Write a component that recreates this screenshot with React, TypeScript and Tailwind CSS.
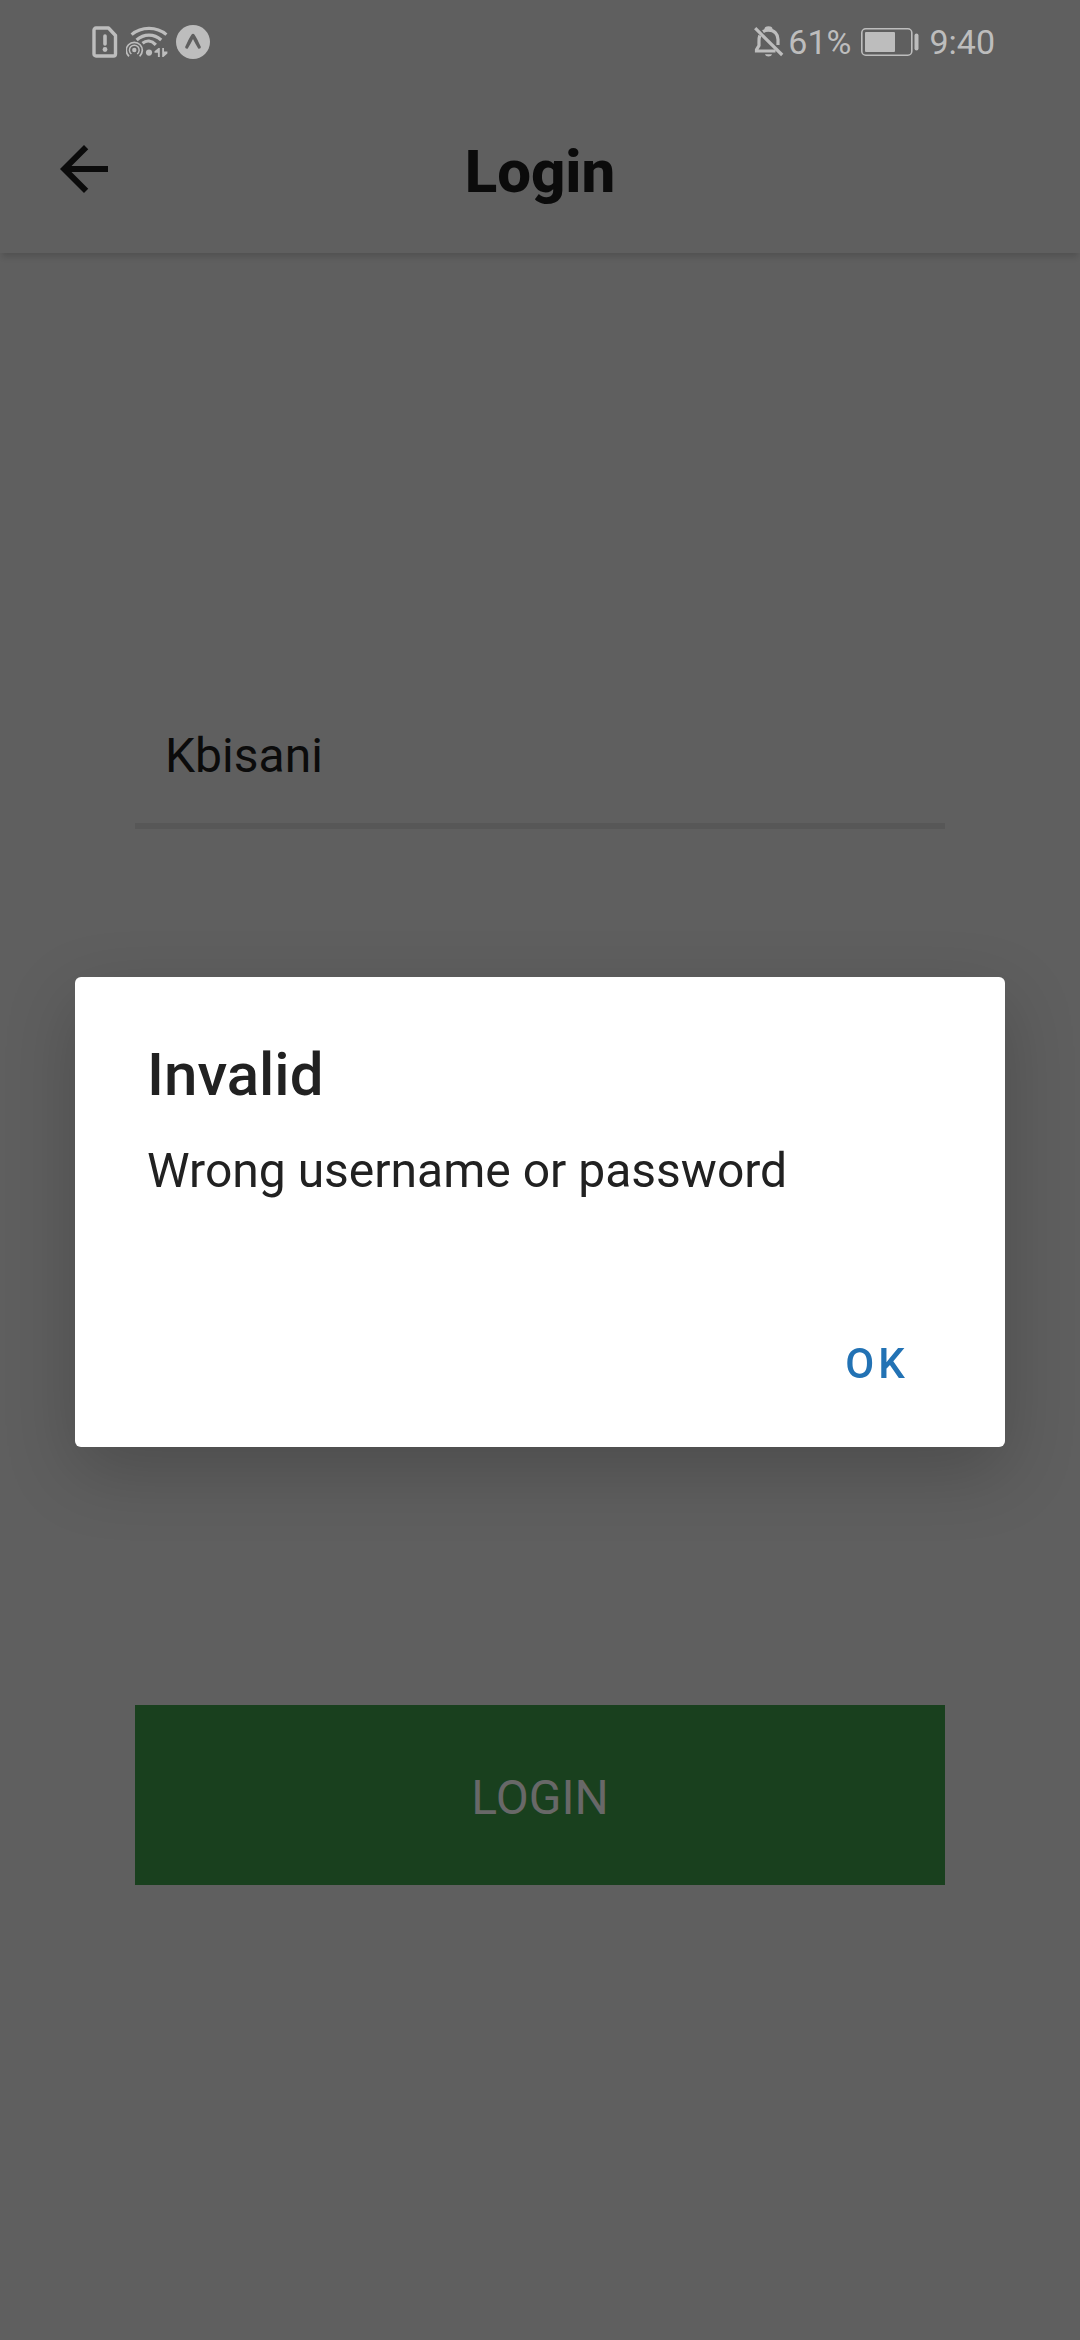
import React, { useState } from "react";

function SimAlertIcon() {
  return (
    <svg className="h-8 w-[26px]" viewBox="0 0 26 32" fill="none" aria-hidden="true">
      <path d="M4 2H16.5L23.5 9.5V28a2 2 0 0 1-2 2H4a2 2 0 0 1-2-2V4a2 2 0 0 1 2-2Z" stroke="currentColor" strokeWidth="3.4" strokeLinejoin="round" />
      <path d="M13 10v8" stroke="currentColor" strokeWidth="3.6" strokeLinecap="round" />
      <circle cx="13" cy="23.5" r="2.4" fill="currentColor" />
    </svg>
  );
}

function WifiHotspotIcon() {
  return (
    <svg className="h-8 w-[42px]" viewBox="0 0 42 32" fill="none" stroke="currentColor" aria-hidden="true">
      <path d="M5.6 8.6C15.5 .2 30.5 .2 40.4 8.6" strokeWidth="3.2" />
      <path d="M10.6 14C18 7.4 28 7.4 35.2 14" strokeWidth="3.2" />
      <path d="M16.5 17.2C20.5 14 25.5 14.2 29.8 18.8" strokeWidth="3.2" />
      <circle cx="23" cy="26.6" r="3.1" fill="currentColor" stroke="none" />
      <circle cx="8.3" cy="24" r="2.2" fill="currentColor" stroke="none" />
      <path d="M5.4 28a4.9 4.9 0 1 1 5.8 0" strokeWidth="1.5" />
      <path d="M3 30.3a8 8 0 1 1 10.6 0" strokeWidth="1.7" />
      <path d="M33.8 22v9h-1.9v-4.2h-3.4v-1.6l4-3.2ZM36.2 22v9h1.2l4-3.4v-2.2H38V22Z" fill="currentColor" stroke="none" />
    </svg>
  );
}

function ExpoIcon() {
  return (
    <svg className="size-[34px]" viewBox="0 0 34 34" aria-hidden="true">
      <circle cx="17" cy="17" r="17" fill="currentColor" />
      <path d="M15.6 9.4c.6-.9 2.200-.9 2.800 0 2 3 4.400 7.800 6.400 12.300.3 1.200-1.500 2.800-2.600 1.700-1.600-2.400-3.600-6.200-5.200-9.400-1.600 3.200-3.600 7-5.200 9.400-1.100 1.100-2.900-.5-2.600-1.700 2-4.500 4.400-9.300 6.400-12.300Z" fill="#5f5f5f" />
    </svg>
  );
}

function BellOffIcon() {
  return (
    <svg className="h-8 w-[30px]" viewBox="0 0 30 32" fill="none" stroke="currentColor" strokeWidth="3.2" aria-hidden="true">
      <path d="M1.200 2.200 28.200 29" />
      <path d="M5.800 9.500C4.700 12 5 15 5 19.500L2.500 23.800V25H21.500" />
      <path d="M9 5.600C10.500 4.600 12 4.200 14.500 4.200 20.500 4.200 24 8.500 24 13.500V19" />
      <path d="M12 5V3.500C12 1.300 17 1.300 17 3.500V5" />
      <path d="M11 28.200h7c-.8 3-6.200 3-7 0Z" fill="currentColor" stroke="none" />
    </svg>
  );
}

function BatteryIcon() {
  return (
    <svg className="h-7 w-[58px]" viewBox="0 0 58 28" fill="none" aria-hidden="true">
      <rect x="0.8" y="0.8" width="50" height="26.400" rx="4" stroke="currentColor" strokeWidth="1.600" />
      <rect x="4" y="4" width="30" height="20" rx="1" fill="currentColor" />
      <rect x="53.500" y="5.500" width="4" height="17" rx="2" fill="currentColor" />
    </svg>
  );
}

function StatusBar() {
  return (
    <div className="flex h-[84px] items-center justify-between pr-[85px] pl-[92px] text-[34px] leading-10 text-[#bdbdbd]">
      <div className="flex items-center gap-2">
        <SimAlertIcon />
        <WifiHotspotIcon />
        <ExpoIcon />
      </div>
      <div className="flex items-center">
        <BellOffIcon />
        <span className="ml-1">61%</span>
        <span className="ml-2.5">
          <BatteryIcon />
        </span>
        <span className="ml-2.5">9:40</span>
      </div>
    </div>
  );
}

export default function App() {
  const [username, setUsername] = useState("Kbisani");
  const [password, setPassword] = useState("");
  const [open, setOpen] = useState(true);

  return (
    <div className="flex min-h-screen flex-col bg-[#5f5f5f] font-['Roboto',sans-serif] text-[#0b0b0b]">
      <StatusBar />
      <header className="grid h-[169px] grid-cols-[1fr_auto_1fr] items-center px-12 shadow-[0_6px_6px_-2px_rgba(0,0,0,0.14)]">
        <button type="button" aria-label="Back" className="size-[72px]">
          <svg viewBox="0 0 24 24" className="size-[72px]" fill="currentColor" aria-hidden="true">
            <path d="M20 11H7.830l5.590-5.590L12 4l-8 8 8 8 1.410-1.410L7.830 13H20v-2z" />
          </svg>
        </button>
        <h1 className="pt-1.5 text-[60px] leading-[72px] font-extrabold">Login</h1>
      </header>

      <main className="px-[12.5%] pt-[426px]">
        <form onSubmit={(e) => e.preventDefault()}>
          <input
            aria-label="Username"
            value={username}
            onChange={(e) => setUsername(e.target.value)}
            className="block h-[150px] w-full border-b-6 border-[#575757] px-[30px] pt-2 text-[48px] outline-none"
          />
          <input
            aria-label="Password"
            type="password"
            value={password}
            onChange={(e) => setPassword(e.target.value)}
            className="mt-[180px] block h-[150px] w-full border-b-6 border-[#575757] px-[30px] pt-2 text-[48px] outline-none"
          />
          <button
            type="submit"
            className="mt-[546px] flex h-[180px] w-full items-center justify-center bg-[#19401e] pt-1.5 text-[48px] text-[#686868]"
          >
            LOGIN
          </button>
        </form>
      </main>

      {open && (
        <div className="fixed inset-0 flex items-center justify-center px-[75px] pt-[84px]">
          <div
            role="alertdialog"
            aria-modal="true"
            aria-labelledby="alert-title"
            aria-describedby="alert-message"
            className="w-full rounded-md bg-white px-[72px] pt-[62px] pb-[12px] text-[#212121] shadow-[0_24px_72px_rgba(0,0,0,0.2)]"
          >
            <h2 id="alert-title" className="text-[60px] leading-[72px] font-medium">Invalid</h2>
            <p id="alert-message" className="mt-[30px] text-[48px] leading-[60px]">Wrong username or password</p>
            <div className="mt-[90px] flex justify-end">
              <button
                type="button"
                onClick={() => setOpen(false)}
                className="h-[144px] px-6 text-[42px] font-medium tracking-widest text-[#2272b4]"
              >
                OK
              </button>
            </div>
          </div>
        </div>
      )}
    </div>
  );
}
